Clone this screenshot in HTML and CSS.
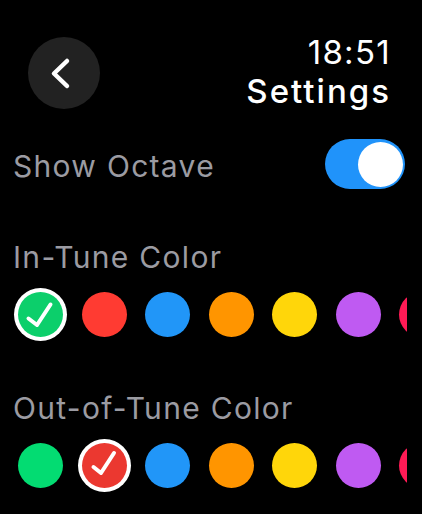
FILE: index.html
```html
<!DOCTYPE html>
<html lang="en">
<head>
  <meta charset="UTF-8">
  <title>Settings</title>
  <link rel="stylesheet" href="styles.css">
</head>
<body>

<div class="screen">
  <div class="header">
    <button class="back" aria-label="Back">
      <svg width="72" height="72" viewBox="0 0 72 72">
        <polyline points="39,24 26,36.5 39,49" fill="none" stroke="#fff" stroke-width="4.5" stroke-linecap="round" stroke-linejoin="round"/>
      </svg>
    </button>
    <div class="title">
      <div class="time">18:51</div>
      <div class="page-name">Settings</div>
    </div>
  </div>

  <div class="setting-row">
    <span class="label">Show Octave</span>
    <div class="toggle on"><div class="knob"></div></div>
  </div>

  <!-- In-tune colour picker -->
  <div class="label section-label">In-Tune Color</div>
  <div class="swatches">
    <div class="swatch green selected">
      <svg width="45" height="45" viewBox="0 0 45 45">
        <polyline points="10.5,26.5 19,33 32.5,12.5" fill="none" stroke="#fff" stroke-width="4" stroke-linecap="round" stroke-linejoin="round"/>
      </svg>
    </div>
    <div class="swatch red"></div>
    <div class="swatch blue"></div>
    <div class="swatch orange"></div>
    <div class="swatch yellow"></div>
    <div class="swatch purple"></div>
    <div class="swatch pink"></div>
  </div>

  <!-- Out-of-tune colour picker -->
  <div class="label section-label second">Out-of-Tune Color</div>
  <div class="swatches">
    <div class="swatch green2"></div>
    <div class="swatch red2 selected">
      <svg width="45" height="45" viewBox="0 0 45 45">
        <polyline points="11.5,24 19,30 32,10" fill="none" stroke="#fff" stroke-width="4" stroke-linecap="round" stroke-linejoin="round"/>
      </svg>
    </div>
    <div class="swatch blue"></div>
    <div class="swatch orange"></div>
    <div class="swatch yellow"></div>
    <div class="swatch purple"></div>
    <div class="swatch pink"></div>
  </div>
</div>

</body>
</html>
```

FILE: styles.css
```css
body {
  margin: 0;
  background: #000;
  font-family: Inter, "Noto Sans", sans-serif;
  color: #fff;
}

.screen {
  padding: 33px 15px 0 13px;
}

.header {
  display: flex;
  justify-content: space-between;
  align-items: flex-start;
}

.back {
  width: 72px;
  height: 72px;
  margin: 4px 0 0 15px;
  padding: 0;
  border: none;
  border-radius: 50%;
  background: #222222;
  display: flex;
}

.title {
  text-align: right;
  margin-right: 16px;
  font-size: 33px;
  line-height: 39px;
}

.time {
  font-weight: 400;
  letter-spacing: 1.3px;
}

.page-name {
  font-weight: 500;
  letter-spacing: 2px;
}

.setting-row {
  display: flex;
  justify-content: space-between;
  align-items: center;
  margin-top: 28px;
  height: 50px;
}

.label {
  color: #9b9ba2;
  font-size: 30px;
  line-height: 36px;
  letter-spacing: 1.3px;
}

.setting-row .label {
  padding-top: 3px;
}

.toggle {
  width: 80px;
  height: 50px;
  border-radius: 25px;
  background: #3a3a3c;
  margin-right: 2px;
  display: flex;
  align-items: center;
  padding: 0 2.5px;
  box-sizing: border-box;
}

.toggle.on {
  background: #2093fa;
  justify-content: flex-end;
}

.knob {
  width: 45px;
  height: 45px;
  border-radius: 50%;
  background: #fff;
}

.section-label {
  margin-top: 50px;
}

.section-label.second {
  margin-top: 48px;
}

.swatches {
  display: flex;
  align-items: center;
  gap: 18.5px;
  height: 54px;
  margin-top: 12.5px;
  padding-left: 5px;
  overflow: hidden;
}

.swatch {
  flex: none;
  width: 45px;
  height: 45px;
  border-radius: 50%;
  display: flex;
}

.swatch.selected {
  box-shadow: 0 0 0 4px #fff;
}

.green { background: #0ccf6b; }
.green2 { background: #03dc72; }
.red { background: #ff3b32; }
.red2 { background: #eb3830; }
.blue { background: #2196f8; }
.orange { background: #ff9500; }
.yellow { background: #ffd60a; }
.purple { background: #bf5af2; }
.pink { background: #ff1a55; }
```
